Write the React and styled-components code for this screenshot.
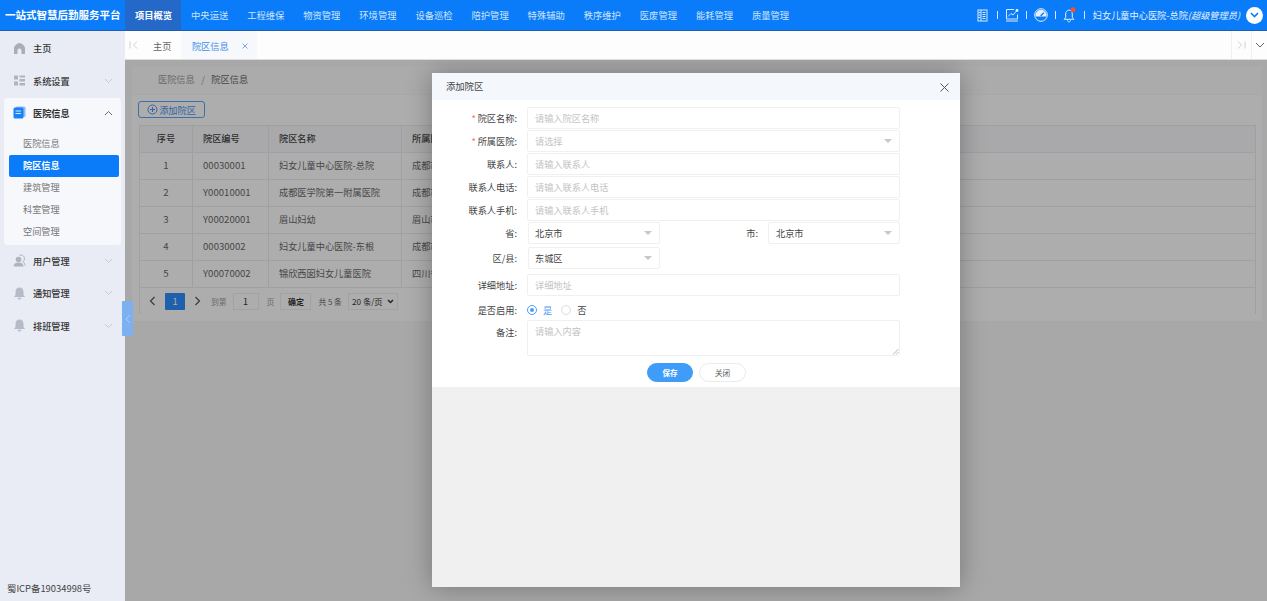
import React from "react";
import styled, { createGlobalStyle } from "styled-components";

const Global = createGlobalStyle`
  html, body { margin: 0; padding: 0; height: 100%; overflow: hidden; }
  body { font-family: "Noto Sans CJK SC", "Liberation Sans", sans-serif; font-size: 9.2px; color: #333; }
  * { box-sizing: border-box; }
`;

const Page = styled.div`
  width: 1267px; height: 601px; display: flex; flex-direction: column; overflow: hidden; position: relative;
`;
const Header = styled.header`
  height: 31px; flex: none; background: #0a7cf9; border-bottom: 1px solid #1d5fae; display: flex; align-items: stretch; color: #fff;
`;
const Brand = styled.div`
  width: 125px; padding-left: 5px; font-size: 10.5px; font-weight: 700; line-height: 30px; white-space: nowrap; flex: none;
`;
const Nav = styled.nav`display: flex;`;
const NavItem = styled.div`
  width: 56.1px; text-align: center; line-height: 30px; font-size: 9.3px; white-space: nowrap; padding-left: 1px;
  color: ${p => (p.$active ? "#fff" : "#cfe4fd")};
  font-weight: ${p => (p.$active ? 700 : 400)};
  background: ${p => (p.$active ? "#2468c8" : "transparent")};
`;
const HeaderRight = styled.div`
  margin-left: auto; display: flex; align-items: center; padding-right: 4px; color: #e8f2ff;
`;
const HeadIcon = styled.span`width: 16px; height: 16px; display: flex; align-items: center; justify-content: center;`;
const Sep = styled.span`width: 1px; height: 8px; background: #d5e6fd; margin: 0 6px 0 6px;`;
const UserName = styled.span`font-size: 9.2px; white-space: nowrap; margin-left: 2px; i { font-style: italic; }`;
const Avatar = styled.span`
  width: 17px; height: 17px; border-radius: 50%; background: #fff; margin-left: 6px; display: flex; align-items: center; justify-content: center;
`;

const Body = styled.div`flex: 1; display: flex; min-height: 0;`;
const Sidebar = styled.aside`
  width: 125px; flex: none; background: #e9ecf5; display: flex; flex-direction: column; padding-top: 2px; position: relative;
`;
const MenuItem = styled.div`
  height: 32.4px; display: flex; align-items: center; padding: 0 0 2px 13px; font-size: 9.2px; color: #333; font-weight: 500;
  svg.lead { width: 13px; height: 13px; margin-right: 7px; flex: none; }
  svg.chev { margin-left: auto; margin-right: 12px; }
`;
const Group = styled.div`
  background: #f6f8fc; border-radius: 3px; margin: 0 4px 1px 4px; height: 147px;
  ${MenuItem} { padding-left: 9px; font-weight: 700; svg.chev { margin-right: 8px; } }
`;
const SubList = styled.div`display: flex; flex-direction: column; padding: 0 2px 0 5px; margin-top: 3px;`;
const SubItem = styled.div`
  height: 22px; line-height: 21px; padding-left: 14px; border-radius: 2px; color: ${p => (p.$active ? "#fff" : "#777")};
  background: ${p => (p.$active ? "#0a7cf9" : "transparent")}; font-weight: ${p => (p.$active ? 700 : 400)};
`;
const Icp = styled.div`margin-top: auto; padding: 0 0 6px 7px; font-size: 9.4px; color: #444;`;
const Handle = styled.div`
  position: absolute; left: 122px; top: 270px; width: 11px; height: 35px; background: #7db0ee; border-radius: 1px; z-index: 3;
  display: flex; align-items: center; justify-content: center;
`;

const Main = styled.main`flex: 1; min-width: 0; display: flex; flex-direction: column;`;
const Tabs = styled.div`height: 29px; flex: none; background: #fdfdfd; display: flex; align-items: stretch; border-bottom: 1px solid #dedede;`;
const TabArrow = styled.div`
  width: ${p => p.$w || 20}px; display: flex; align-items: center; justify-content: center;
  border-left: ${p => (p.$edge ? "1px solid #f0f0f0" : "none")};
`;
const LeftArrow = styled(TabArrow)`width: 17px;`;
const Tab = styled.div`
  display: flex; align-items: center; padding: ${p => (p.$active ? "1px 9px 0 10.5px" : "1px 10px 0 11px")}; color: ${p => (p.$active ? "#3d8ee8" : "#666")};
  background: ${p => (p.$active ? "#f7f8fb" : "transparent")}; white-space: nowrap;
`;
const TabClose = styled.svg`margin-left: 13px; flex: none;`;
const TabSpacer = styled.div`flex: 1;`;

const Content = styled.div`flex: 1; position: relative; background: #f1f1f1; padding: 6px 5px 0 7px; overflow: hidden;`;
const Crumb = styled.div`
  height: 28px; background: #f5f5f5; padding: 0 0 2px 26px; display: flex; align-items: center; gap: 6.500px; color: #999; margin-bottom: 1px;
  b { font-weight: 400; color: #666; }
`;
const Card = styled.section`background: #f8f8f8; padding: 6px 6px 8px 7px; height: 226px;`;
const AddBtn = styled.div`
  width: 67px; height: 17px; border: 1px solid #5a9fee; border-radius: 3px; color: #4a90e8; display: flex; align-items: center; justify-content: center; gap: 1px; margin-bottom: 7px; margin-left: -1px;
`;
const TableGrid = styled.div`border: 1px solid #e6e6e6; border-bottom: none;`;
const Row = styled.div`
  display: grid; grid-template-columns: 53px 76px 133px 1fr; height: 27px; align-items: stretch; border-bottom: 1px solid #e6e6e6;
  background: ${p => (p.$head ? "#f2f3f5" : "transparent")}; font-weight: ${p => (p.$head ? 500 : 400)}; color: ${p => (p.$head ? "#444" : "#666")};
`;
const Cell = styled.div`
  display: flex; align-items: center; padding: 0 0 2px 10px; border-right: 1px solid #e6e6e6; white-space: nowrap;
  justify-content: ${p => (p.$center ? "center" : "flex-start")}; ${p => p.$center && "padding-left:0;"}
  &:last-child { border-right: none; }
  font-size: ${p => (p.$num ? "9.6px" : "9.2px")};
`;
const Pager = styled.div`height: 26px; display: flex; align-items: center; padding-left: 9px; color: #555;`;
const PageBtn = styled.span`
  width: 20px; height: 17px; background: #2b8af5; color: #fff; display: flex; align-items: center; justify-content: center; margin: 0 9px 0 9px; border-radius: 1px;
`;
const PagerBox = styled.span`
  height: 17px; border: 1px solid #e8e8e8; display: flex; align-items: center; justify-content: center; gap: 4px; width: ${p => p.$w}px; margin: ${p => p.$m || "0"}; color: #333;
  font-weight: ${p => (p.$bold ? 700 : 400)}; font-size: ${p => (p.$s || 9)}px; white-space: nowrap;
`;
const PagerText = styled.span`color: ${p => (p.$c || "#999")}; font-size: 7.800px; white-space: nowrap; margin: ${p => p.$m || "0"};`;

const Overlay = styled.div`position: absolute; inset: 0; background: rgba(0,0,0,.3); z-index: 2;`;
const Modal = styled.div`
  position: absolute; left: 307px; top: 13px; width: 528px; height: 514px; background: #f0f0f0; box-shadow: 0 0 24px rgba(0,0,0,.3);
  display: flex; flex-direction: column;
`;
const ModalHead = styled.div`
  height: 27px; flex: none; background: #f4f7fb; display: flex; align-items: center; justify-content: space-between; padding: 0 11px 2px 14px; font-size: 9.3px; color: #444;
  svg { margin-top: 4px; }
`;
const ModalBody = styled.form`background: #fff; height: 287px; padding-top: 7px; flex: none;`;
const FormRow = styled.div`
  display: grid; grid-template-columns: 85px ${p => (p.$two ? "143px 98px 142px" : "383px")}; margin-bottom: ${p => p.$mb ?? 1}px; align-items: center;
`;
const Label = styled.label`
  text-align: right; font-size: 9.2px; color: #444; white-space: nowrap; align-self: ${p => (p.$top ? "start" : "auto")}; margin-top: ${p => (p.$top ? "5px" : "0")};
  em { color: #f56c6c; font-style: normal; margin-right: 2px; }
`;
const Control = styled.div`
  height: ${p => p.$h || 22}px; margin-left: ${p => p.$ml ?? 10}px; border: 1px solid #f0f0f0; border-radius: 2px; display: flex; align-items: ${p => (p.$top ? "flex-start" : "center")};
  padding: ${p => (p.$top ? "3px" : "0")} 7px 0 ${p => p.$pl ?? 7}px;
  color: ${p => (p.$value ? "#444" : "#c4c4c4")}; font-size: 9.2px; position: relative; background: #fff;
`;
const Caret = styled.span`
  margin-left: auto; width: 0; height: 0; border-left: 4px solid transparent; border-right: 4px solid transparent; border-top: 4px solid #c8c8c8;
`;
const Grip = styled.svg`position: absolute; right: 0; bottom: 0;`;
const RadioWrap = styled.div`margin-left: 10px; height: 18px; display: flex; align-items: center; font-size: 9.2px;`;
const Radio = styled.span`
  width: 10px; height: 10px; border-radius: 50%; border: 1px solid ${p => (p.$on ? "#4b9cf5" : "#dcdcdc")}; display: flex; align-items: center; justify-content: center;
  &::after { content: ""; width: 4px; height: 4px; border-radius: 50%; background: ${p => (p.$on ? "#4b9cf5" : "transparent")}; }
`;
const RadioText = styled.span`margin: 0 9px 0 6px; color: ${p => (p.$on ? "#4b9cf5" : "#444")};`;
const Actions = styled.div`display: flex; padding-left: 215px; gap: 6px; margin-top: 7px;`;
const Pill = styled.div`
  width: ${p => p.$w}px; height: 19px; border-radius: 10px; display: flex; align-items: center; justify-content: center; font-size: 7.6px;
  background: ${p => (p.$primary ? "#3f9cf8" : "#fff")}; color: ${p => (p.$primary ? "#fff" : "#555")}; border: 1px solid ${p => (p.$primary ? "#3f9cf8" : "#ebebeb")};
  font-weight: ${p => (p.$primary ? 700 : 400)};
`;

const Chev = ({ up, color = "#c6cad3" }) => (
  <svg className="chev" width="9" height="6" viewBox="0 0 9 6" fill="none" stroke={color} strokeWidth="1">
    <path d={up ? "M1 5l3.5-3.5L8 5" : "M1 1l3.5 3.5L8 1"} />
  </svg>
);
const Bell = () => (
  <svg className="lead" viewBox="0 0 13 13" fill="#b7bbc8">
    <path d="M6.5 .5C3.800 .5 2.500 2.500 2.500 5v3L.8 10h11.400L10.500 8V5c0-2.500-1.300-4.500-4-4.500z" /><path d="M4.600 10.800h3.800c0 1.200-.9 1.800-1.900 1.800s-1.900-.6-1.900-1.800z" />
  </svg>
);
const HomeIco = () => (
  <svg className="lead" viewBox="0 0 13 13" fill="#a9adb9">
    <path d="M6.500 1C4.500 1 1 4 1 6v6h3.500V8.500a2 2 0 0 1 4 0V12H12V6c0-2-3.500-5-5.500-5z" />
  </svg>
);
const GridIco = () => (
  <svg className="lead" viewBox="0 0 13 13" fill="#b0b4c0">
    <rect x="1" y="1.500" width="4" height="4" /><rect x="1" y="7.500" width="4" height="4" />
    <rect x="6.500" y="1.500" width="5.500" height="2" /><rect x="6.500" y="5" width="5.500" height="2.500" /><rect x="6.500" y="9" width="5.500" height="2.500" />
  </svg>
);
const BookIco = () => (
  <svg className="lead" viewBox="0 0 13 13">
    <rect x="2.500" y=".5" width="10" height="10.500" rx="1.500" fill="#8dbdf7" />
    <rect x=".5" y="1.500" width="10" height="11" rx="1.500" fill="#1b82f5" />
    <path d="M2.500 5h5.500M2.500 7.500h5.500" stroke="#d5e7fd" strokeWidth="1" />
  </svg>
);
const UserIco = () => (
  <svg className="lead" viewBox="0 0 13 13" fill="#b0b4c0">
    <circle cx="5.500" cy="5.500" r="2.800" /><path d="M.5 12.500c0-2.800 2.200-4 5-4s5 1.200 5 4z" />
    <path d="M6.500 1.200c2.500-.8 5 .8 5 3.500 0 1.500-.8 2.500-1.800 3 1.300.6 2.300 2 2.300 4" fill="none" stroke="#b0b4c0" />
  </svg>
);
const DocIco = () => (
  <svg width="11" height="13" viewBox="0 0 11 13" fill="none" stroke="#d9e9fd" strokeWidth="1">
    <rect x="1" y="1" width="9" height="11" /><path d="M4 1v11M5.500 3.500h3M5.500 5.500h3M5.500 7.500h3M5.500 9.500h3M1.500 3.500h2M1.500 6h2M1.500 8.500h2" />
  </svg>
);
const ChartIco = () => (
  <svg width="14" height="14" viewBox="0 0 14 14" fill="none" stroke="#d9e9fd" strokeWidth="1">
    <path d="M9 1.500H1.500v9.500h11V6.500" /><path d="M3 8.500L6 5.500l2 1.500L11.500 3" /><path d="M1 13h12" />
    <circle cx="12" cy="2.500" r="1.400" fill="#eaf3fe" stroke="none" />
  </svg>
);
const GaugeIco = () => (
  <svg width="14" height="14" viewBox="0 0 14 14" fill="none">
    <circle cx="7" cy="7" r="6.300" stroke="#e6f0fd" strokeWidth="1" />
    <path d="M1.800 8.600a5.400 5.400 0 1 1 10.400 0z" fill="#e6f0fd" />
    <path d="M6.600 8l3.200-3.200" stroke="#0a7cf9" strokeWidth="1.400" />
  </svg>
);
const BellHead = () => (
  <svg width="14" height="16" viewBox="0 0 14 16">
    <path d="M6 3c-2.200.4-3.300 2-3.300 4v3.300L1.200 12.300h9.600L9.300 10.300V7C9.300 5 8.200 3.400 6 3z M4.500 13.300c.2 1 .8 1.600 1.500 1.600s1.300-.6 1.500-1.600" fill="none" stroke="#e4effd" strokeWidth="1" />
    <circle cx="10" cy="2.700" r="2.500" fill="#f4522d" />
  </svg>
);

const Edge = ({ dir }) => (
  <svg width="9" height="8" viewBox="0 0 9 8" fill="none" stroke="#d0d0d0" strokeWidth="1">
    <path d={dir === "l" ? "M1 .5v7M8 .5L4.500 4 8 7.500" : "M8 .5v7M1 .5L4.500 4 1 7.500"} />
  </svg>
);
const PagerArrow = ({ r }) => (
  <svg width="7" height="10" viewBox="0 0 7 10" fill="none" stroke="#555" strokeWidth="1.200">
    <path d={r ? "M1.500 1l4 4-4 4" : "M5.500 1l-4 4 4 4"} />
  </svg>
);

const navs = ["项目概览","中央运送","工程维保","物资管理","环境管理","设备巡检","陪护管理","特殊辅助","秩序维护","医废管理","能耗管理","质量管理"];
const rows = [
  ["1","00030001","妇女儿童中心医院-总院","成都市"],
  ["2","Y00010001","成都医学院第一附属医院","成都市"],
  ["3","Y00020001","眉山妇幼","眉山市"],
  ["4","00030002","妇女儿童中心医院-东根","成都市"],
  ["5","Y00070002","锦欣西囡妇女儿童医院","四川省"],
];
const subs = ["医院信息","院区信息","建筑管理","科室管理","空间管理"];
const textFields = [
  ["院区名称","请输入院区名称",true],
  ["所属医院","请选择",true,true],
  ["联系人","请输入联系人"],
  ["联系人电话","请输入联系人电话"],
  ["联系人手机","请输入联系人手机"],
];

export default function App() {
  return (
    <Page>
      <Global />
      <Header>
        <Brand>一站式智慧后勤服务平台</Brand>
        <Nav>{navs.map((n, i) => <NavItem key={n} $active={i === 0}>{n}</NavItem>)}</Nav>
        <HeaderRight>
          <HeadIcon><DocIco /></HeadIcon><Sep />
          <HeadIcon><ChartIco /></HeadIcon><Sep />
          <HeadIcon><GaugeIco /></HeadIcon><Sep />
          <HeadIcon><BellHead /></HeadIcon><Sep />
          <UserName>妇女儿童中心医院-总院<i>(超级管理员)</i></UserName>
          <Avatar>
            <svg width="9" height="6" viewBox="0 0 9 6" fill="none" stroke="#0a7cf9" strokeWidth="1.600"><path d="M1 1l3.500 3.500L8 1" /></svg>
          </Avatar>
        </HeaderRight>
      </Header>
      <Body>
        <Sidebar>
          <MenuItem><HomeIco />主页</MenuItem>
          <MenuItem><GridIco />系统设置<Chev /></MenuItem>
          <Group>
            <MenuItem><BookIco />医院信息<Chev up color="#666" /></MenuItem>
            <SubList>{subs.map((s, i) => <SubItem key={s} $active={i === 1}>{s}</SubItem>)}</SubList>
          </Group>
          <MenuItem><UserIco />用户管理<Chev /></MenuItem>
          <MenuItem><Bell />通知管理<Chev /></MenuItem>
          <MenuItem><Bell />排班管理<Chev /></MenuItem>
          <Icp>蜀ICP备19034998号</Icp>
          <Handle>
            <svg width="6" height="10" viewBox="0 0 6 10" fill="none" stroke="#a9cbf5" strokeWidth="1"><path d="M5 1L1 5l4 4" /></svg>
          </Handle>
        </Sidebar>
        <Main>
          <Tabs>
            <LeftArrow><Edge dir="l" /></LeftArrow>
            <Tab>主页</Tab>
            <Tab $active>
              院区信息
              <TabClose width="6" height="6" viewBox="0 0 6 6" fill="none" stroke="#7aa6e4" strokeWidth="1"><path d="M.5.5l5 5M5.500.5l-5 5" /></TabClose>
            </Tab>
            <TabSpacer />
            <TabArrow $edge><Edge dir="r" /></TabArrow>
            <TabArrow $edge $w={16}>
              <svg width="10" height="6" viewBox="0 0 10 6" fill="none" stroke="#666" strokeWidth="1"><path d="M1 1l4 4 4-4" /></svg>
            </TabArrow>
          </Tabs>
          <Content>
            <Crumb>医院信息 <span>/</span> <b>院区信息</b></Crumb>
            <Card>
              <AddBtn>
                <svg width="11" height="11" viewBox="0 0 11 11" fill="none" stroke="#4a90e8" strokeWidth="1"><circle cx="5.500" cy="5.500" r="4.500" /><path d="M3 5.500h5M5.500 3v5" /></svg>
                添加院区
              </AddBtn>
              <TableGrid>
                <Row $head>
                  <Cell $center>序号</Cell><Cell>院区编号</Cell><Cell>院区名称</Cell><Cell>所属医院</Cell>
                </Row>
                {rows.map(r => (
                  <Row key={r[0]}>
                    <Cell $center $num>{r[0]}</Cell><Cell $num>{r[1]}</Cell><Cell>{r[2]}</Cell><Cell>{r[3]}</Cell>
                  </Row>
                ))}
                <Pager>
                  <PagerArrow />
                  <PageBtn>1</PageBtn>
                  <PagerArrow r />
                  <PagerText $m="0 6px 0 10px">到第</PagerText>
                  <PagerBox $w={26}>1</PagerBox>
                  <PagerText $m="0 6px 0 8px">页</PagerText>
                  <PagerBox $w={31} $bold $s={8}>确定</PagerBox>
                  <PagerText $c="#666" $m="0 6px 0 7px">共 5 条</PagerText>
                  <PagerBox $w={50} $s={8.200}>
                    20 条/页
                    <svg width="7" height="5" viewBox="0 0 7 5" fill="none" stroke="#333" strokeWidth="1.500"><path d="M1 1l2.500 2.500L6 1" /></svg>
                  </PagerBox>
                </Pager>
              </TableGrid>
            </Card>
            <Overlay>
              <Modal>
                <ModalHead>
                  添加院区
                  <svg width="9" height="9" viewBox="0 0 9 9" fill="none" stroke="#555" strokeWidth="1"><path d="M.5.500l8 8M8.500.500l-8 8" /></svg>
                </ModalHead>
                <ModalBody>
                  {textFields.map(([l, ph, req, sel]) => (
                    <FormRow key={l}>
                      <Label>{req && <em>*</em>}{l}:</Label>
                      <Control>{ph}{sel && <Caret />}</Control>
                    </FormRow>
                  ))}
                  <FormRow $two $mb={3}>
                    <Label>省:</Label>
                    <Control $value $ml={11} $pl={6}>北京市<Caret /></Control>
                    <Label>市:</Label>
                    <Control $value $pl={7}>北京市<Caret /></Control>
                  </FormRow>
                  <FormRow $two $mb={5}>
                    <Label>区/县:</Label>
                    <Control $value $ml={11} $pl={6}>东城区<Caret /></Control>
                  </FormRow>
                  <FormRow $mb={5}>
                    <Label>详细地址:</Label>
                    <Control>详细地址</Control>
                  </FormRow>
                  <FormRow $mb={1}>
                    <Label>是否启用:</Label>
                    <RadioWrap>
                      <Radio $on /><RadioText $on>是</RadioText>
                      <Radio /><RadioText>否</RadioText>
                    </RadioWrap>
                  </FormRow>
                  <FormRow>
                    <Label $top>备注:</Label>
                    <Control $h={36} $top>
                      请输入内容
                      <Grip width="7" height="7" viewBox="0 0 7 7" fill="none" stroke="#999" strokeWidth=".7"><path d="M1 6.500L6.500 1M4 6.500L6.500 4" /></Grip>
                    </Control>
                  </FormRow>
                  <Actions>
                    <Pill $primary $w={46}>保存</Pill>
                    <Pill $w={47}>关闭</Pill>
                  </Actions>
                </ModalBody>
              </Modal>
            </Overlay>
          </Content>
        </Main>
      </Body>
    </Page>
  );
}
